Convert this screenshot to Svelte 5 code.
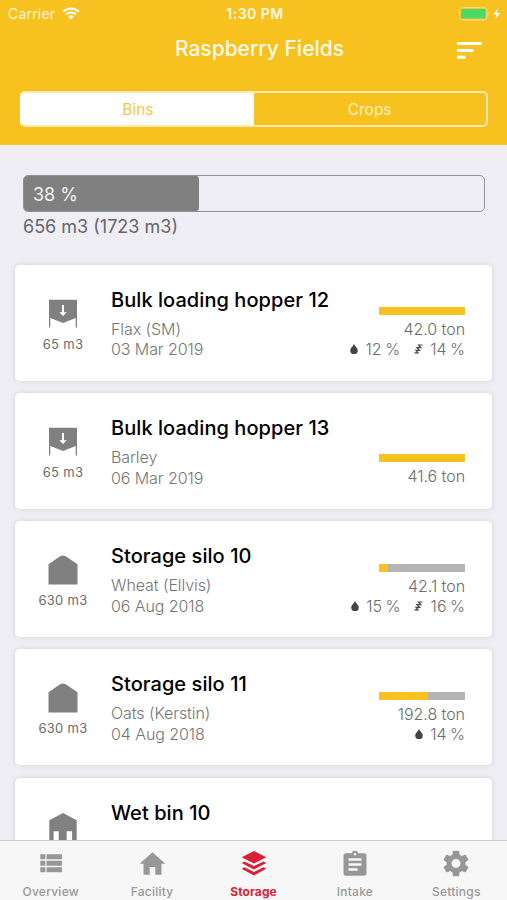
<script lang="ts">
  type Kind = "hopper" | "silo" | "wet";
  interface Bin {
    id: number;
    kind: Kind;
    name: string;
    volume: string;
    crop?: string;
    date?: string;
    fill?: number;
    weight?: string;
    moisture?: number;
    protein?: number;
  }

  const bins: Bin[] = [
    { id: 1, kind: "hopper", name: "Bulk loading hopper 12", volume: "65 m3", crop: "Flax (SM)", date: "03 Mar 2019", fill: 100, weight: "42.0 ton", moisture: 12, protein: 14 },
    { id: 2, kind: "hopper", name: "Bulk loading hopper 13", volume: "65 m3", crop: "Barley", date: "06 Mar 2019", fill: 100, weight: "41.6 ton" },
    { id: 3, kind: "silo", name: "Storage silo 10", volume: "630 m3", crop: "Wheat (Ellvis)", date: "06 Aug 2018", fill: 10, weight: "42.1 ton", moisture: 15, protein: 16 },
    { id: 4, kind: "silo", name: "Storage silo 11", volume: "630 m3", crop: "Oats (Kerstin)", date: "04 Aug 2018", fill: 56.5, weight: "192.8 ton", moisture: 14 },
    { id: 5, kind: "wet", name: "Wet bin 10", volume: "" },
  ];

  const tabs = ["Overview", "Facility", "Storage", "Intake", "Settings"];
  let activeTab = $state("Storage");
  let segment = $state("Bins");
  const used = 38;
</script>

<div class="screen">
  <header>
    <div class="status">
      <div class="carrier">
        <span>Carrier</span>
        <svg width="18" height="13" viewBox="0 0 18 13" fill="none" stroke="#fff" stroke-width="2.1">
          <path d="M1.2 4.7a11.1 11.1 0 0 1 15.6 0" />
          <path d="M4 7.6a7.1 7.1 0 0 1 10 0" />
          <path d="M9 12.4 6.2 9.6a4 4 0 0 1 5.6 0z" fill="#fff" stroke="none" />
        </svg>
      </div>
      <span class="time">1:30 PM</span>
      <div class="battery">
        <svg width="43" height="14" viewBox="0 0 43 14">
          <rect x="0.6" y="0.6" width="27.4" height="12.3" rx="2.8" fill="none" stroke="#fbe08c" stroke-width="1" />
          <rect x="2" y="2" width="24.6" height="9.5" rx="1.3" fill="#4cd964" />
          <path d="M29.4 4.8q2 2 0 4z" fill="#fbe08c" />
          <path d="M38.6 1.5 34.4 7.4h3L36.2 12l5-6.1h-3.1z" fill="#fff" />
        </svg>
      </div>
    </div>

    <div class="title-row">
      <h1>Raspberry Fields</h1>
      <button class="sort" aria-label="Sort">
        <svg width="25" height="17" viewBox="0 0 25 17" fill="#fff">
          <rect width="25" height="3" />
          <rect y="7" width="16.5" height="3" />
          <rect y="13.7" width="8.5" height="3" />
        </svg>
      </button>
    </div>

    <div class="segments">
      {#each ["Bins", "Crops"] as s}
        <button class:selected={segment === s} onclick={() => (segment = s)}>{s}</button>
      {/each}
    </div>
  </header>

  <main>
    <div class="capacity">
      <div class="capacity-fill" style="width: {used}%">{used} %</div>
    </div>
    <p class="capacity-text">656 m3 (1723 m3)</p>

    <div class="cards">
      {#each bins as bin (bin.id)}
        <article>
          <div class="kind">
            <svg width="30" height="30" viewBox="0 0 30 30" fill="#808080">
              {#if bin.kind === "hopper"}
                <path d="M1 .8h28v27.600h-1.300V18.900L15 23.900 2.300 18.900v9.500H1z" />
                <path d="M14 5.900h2v7.300h2.700L15 17.100l-3.700-3.900H14z" fill="#fff" />
              {:else if bin.kind === "silo"}
                <path d="M.5 29.500V9.300L11.800 1.600Q15-.7 18.200 1.600L29.500 9.300v20.200z" />
              {:else}
                <path d="M1.3 30V8.2L15 1l13.700 7.200V30h-4.600V19.200h-5.400V30h-8V19.200H5.600V30z" />
              {/if}
            </svg>
            <span>{bin.volume}</span>
          </div>
          <div class="info">
            <h2>{bin.name}</h2>
            <p>{bin.crop ?? ""}</p>
            <p>{bin.date ?? ""}</p>
          </div>
          {#if bin.weight}
            <div class="stats">
              <div class="level"><div style="width: {bin.fill}%"></div></div>
              <span class="weight">{bin.weight}</span>
              {#if bin.moisture}
                <div class="quality">
                  <svg width="8" height="10" viewBox="0 0 8 10" fill="#444">
                    <path d="M4 0C5 2.300 7.800 4 7.800 6.400a3.800 3.600 0 0 1-7.600 0C.2 4 3 2.300 4 0z" />
                  </svg>
                  <span>{bin.moisture} %</span>
                  {#if bin.protein}
                    <svg class="protein" width="9" height="10" viewBox="0 0 9 10" fill="none" stroke="#444" stroke-width="1.200">
                      <path d="M8.500 1H4.500l2.300 2.600H3l2.500 2.700H2l2 2.500H.5" />
                    </svg>
                    <span>{bin.protein} %</span>
                  {/if}
                </div>
              {/if}
            </div>
          {/if}
        </article>
      {/each}
    </div>
  </main>

  <nav>
    {#each tabs as tab}
      <button class:active={activeTab === tab} onclick={() => (activeTab = tab)}>
        <svg width="28" height="28" viewBox="0 0 28 28" fill="currentColor">
          {#if tab === "Overview"}
            <path d="M3.300 4.300h5v5h-5zM9.500 4.300H25v5H9.500zM3.300 10.800h5v5h-5zM9.500 10.800H25v5H9.500zM3.300 17.300h5v5h-5zM9.500 17.300H25v5H9.500z" />
          {:else if tab === "Facility"}
            <path d="M14.500 2.200 27.300 13.700h-3.800v11h-6.200V17h-5.600v7.700H5.500v-11H1.700z" />
          {:else if tab === "Storage"}
            <path d="M14 1 26.300 7.200 14 13.400 1.700 7.200z" />
            <path d="M4.500 11.400 14 16.100l9.500-4.700 2.800 1.500L14 19.400 1.700 12.900z" />
            <path d="M4.500 17.300 14 22l9.500-4.700 2.800 1.500L14 25.400 1.700 18.800z" />
          {:else if tab === "Intake"}
            <path fill-rule="evenodd" d="M5 3.200h5.600a3.600 3.600 0 0 1 6.800 0H23a2.500 2.500 0 0 1 2.500 2.500v17.600a2.500 2.500 0 0 1-2.500 2.500H5a2.500 2.500 0 0 1-2.500-2.500V5.700A2.500 2.500 0 0 1 5 3.200zM14 2.900a1.300 1.300 0 1 0 0 2.600 1.300 1.300 0 0 0 0-2.600zM7.500 8.200v2.500h13V8.200zm0 5v2.500h13v-2.500zm0 5v2.500h9v-2.500z" />
          {:else}
            <path transform="translate(-1.200 -1.700) scale(1.267)" d="M19.430 12.980c.04-.32.07-.64.07-.98s-.03-.66-.07-.98l2.110-1.650c.19-.15.24-.42.12-.64l-2-3.460c-.12-.22-.39-.3-.61-.22l-2.490 1c-.52-.4-1.080-.73-1.690-.98l-.38-2.650C14.460 2.180 14.250 2 14 2h-4c-.25 0-.46.18-.49.42l-.38 2.650c-.61.25-1.170.59-1.690.98l-2.490-1c-.23-.09-.49 0-.61.22l-2 3.460c-.13.22-.07.49.12.64l2.110 1.650c-.04.32-.07.65-.07.98s.03.66.07.98l-2.110 1.650c-.19.15-.24.42-.12.64l2 3.460c.12.22.39.3.61.22l2.490-1c.52.4 1.080.73 1.690.98l.38 2.650c.03.24.24.42.49.42h4c.25 0 .46-.18.49-.42l.38-2.650c.61-.25 1.170-.59 1.690-.98l2.490 1c.23.09.49 0 .61-.22l2-3.460c.12-.22.07-.49-.12-.64l-2.110-1.650zM12 15.500c-1.930 0-3.500-1.570-3.500-3.500s1.570-3.500 3.500-3.500 3.500 1.570 3.500 3.500-1.570 3.500-3.500 3.500z" />
          {/if}
        </svg>
        <span>{tab}</span>
      </button>
    {/each}
  </nav>
</div>

<style>
  :global(body) {
    margin: 0;
    overflow: hidden;
  }
  .screen {
    display: flex;
    flex-direction: column;
    width: 507px;
    height: 900px;
    overflow: hidden;
    background: #efeef4;
    font-family: Inter, "Liberation Sans", sans-serif;
  }
  button {
    padding: 0;
    border: 0;
    background: none;
    font: inherit;
    color: inherit;
  }
  h1, h2, p { margin: 0; }

  header {
    flex: none;
    box-sizing: border-box;
    height: 145px;
    background: #f7c120;
    color: #fff;
  }
  .status {
    display: grid;
    grid-template-columns: 1fr auto 1fr;
    align-items: center;
    height: 27px;
    padding: 0 5px 0 8px;
    font-size: 14px;
  }
  .carrier {
    display: flex;
    align-items: center;
    gap: 7px;
    letter-spacing: 0.2px;
    color: #fff5d8;
  }
  .time {
    font-weight: 600;
    font-size: 14px;
    letter-spacing: 0.5px;
    color: #fff8e4;
  }
  .battery {
    display: flex;
    justify-content: flex-end;
  }
  .title-row {
    display: grid;
    grid-template-columns: 60px 1fr 60px;
    align-items: center;
    height: 43px;
    margin-bottom: 21px;
  }
  h1 {
    grid-column: 2;
    padding-left: 12px;
    text-align: center;
    font-size: 21px;
    font-weight: 500;
    color: #fffaeb;
  }
  .sort {
    display: flex;
    padding: 4px 0 0 10px;
  }
  .segments {
    display: flex;
    box-sizing: border-box;
    height: 36px;
    margin: 0 19.5px 0 20px;
    border: 2px solid #fdeaac;
    border-radius: 5px;
    background: #f7c120;
    overflow: hidden;
  }
  .segments:has(.selected:first-child) { border-left-color: #fff; }
  .segments button {
    flex: 1;
    font-size: 15.5px;
    color: #fff0bd;
  }
  .segments .selected {
    background: #fff;
    color: #f7c648;
  }

  main {
    flex: 1;
    min-height: 0;
    padding: 30px 15px 0;
    overflow: hidden;
  }
  .capacity {
    box-sizing: border-box;
    height: 37px;
    margin: 0 7px 0 8px;
    border: 1.5px solid #929296;
    border-radius: 5px;
    overflow: hidden;
  }
  .capacity-fill {
    box-sizing: border-box;
    height: 100%;
    padding-left: 9px;
    border-radius: 0 3px 3px 0;
    background: #808080;
    color: #f2f2f2;
    font-size: 18px;
    line-height: 37px;
  }
  .capacity-text {
    margin: 2px 8px 0;
    font-size: 18px;
    line-height: 25px;
    color: #66666a;
  }
  .cards {
    display: flex;
    flex-direction: column;
    gap: 12.3px;
    padding-top: 25.5px;
  }
  article {
    display: flex;
    flex: none;
    box-sizing: border-box;
    height: 116px;
    padding-right: 27px;
    border-radius: 5px;
    background: #fff;
    box-shadow: 0 0 5px rgba(0, 0, 0, 0.13);
  }
  .kind {
    display: flex;
    flex-direction: column;
    align-items: center;
    gap: 7px;
    width: 96px;
    padding-top: 34px;
    font-size: 13px;
    line-height: 16px;
    letter-spacing: 0.3px;
    color: #6c6c6c;
  }
  .info {
    flex: 1;
    padding-top: 22px;
  }
  h2 {
    margin-bottom: 6px;
    font-size: 20px;
    font-weight: 500;
    line-height: 26px;
    letter-spacing: 0.06px;
    color: #000;
  }
  .info p {
    font-size: 16px;
    font-weight: 300;
    line-height: 20.7px;
    letter-spacing: -0.08px;
    color: #757575;
  }
  .stats {
    display: flex;
    flex-direction: column;
    justify-content: flex-end;
    align-items: flex-end;
    padding-bottom: 22.5px;
    font-size: 16px;
    font-weight: 300;
    line-height: 20px;
    color: #6c6c6c;
  }
  .level {
    width: 86px;
    height: 8px;
    margin-bottom: 4px;
    background: #b5b5b5;
  }
  .level div {
    height: 100%;
    background: #f7c120;
  }
  .weight { letter-spacing: -0.05px; }
  .quality {
    display: flex;
    align-items: center;
    gap: 7.5px;
    margin-bottom: -1px;
    word-spacing: -1px;
  }
  .protein { margin-left: 6px; }

  nav {
    display: flex;
    flex: none;
    box-sizing: border-box;
    height: 60px;
    border-top: 1px solid #d0d0d3;
    background: #f7f7f7;
  }
  nav button {
    display: flex;
    flex: 1;
    flex-direction: column;
    align-items: center;
    gap: 5.5px;
    padding-top: 9px;
    font-size: 12px;
    font-weight: 500;
    line-height: 16px;
    letter-spacing: 0.25px;
    color: #979797;
  }
  nav .active {
    font-weight: 700;
    letter-spacing: 0.1px;
    color: #d91e36;
  }
</style>
